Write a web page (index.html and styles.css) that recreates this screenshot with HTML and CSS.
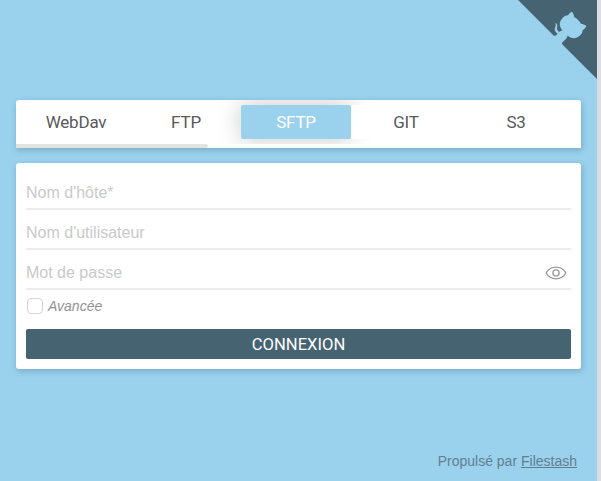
FILE: index.html
```html
<!DOCTYPE html>
<html lang="fr">
<head>
<meta charset="utf-8">
<title>Filestash</title>
<link rel="stylesheet" href="styles.css">
</head>
<body>
<div class="page">
  <a class="corner" aria-label="GitHub">
    <svg width="80" height="80" viewBox="0 0 250 250">
      <path class="corner-bg" d="M0,0 L115,115 L130,115 L142,142 L250,250 L250,0 Z"/>
      <path class="cat" d="M128.3,109.0 C113.8,99.7 119.0,89.6 119.0,89.6 C122.0,82.7 120.5,78.6 120.5,78.6 C119.2,72.0 123.4,76.3 123.4,76.3 C127.3,80.9 125.5,87.3 125.5,87.3 C122.9,97.6 130.6,101.9 134.4,103.2"/>
      <path class="cat" d="M115.0,115.0 C114.9,115.1 118.7,116.5 119.8,115.4 L133.7,101.6 C136.9,99.2 139.9,98.4 142.2,98.6 C133.8,88.0 127.5,74.4 143.8,58.0 C148.5,53.4 154.0,51.2 159.7,51.0 C160.3,49.4 163.2,43.6 171.4,40.1 C171.4,40.1 176.1,42.5 178.8,56.2 C183.1,58.6 187.2,61.8 190.9,65.4 C194.5,69.0 197.7,73.2 200.1,77.6 C213.8,80.2 216.3,84.9 216.3,84.9 C212.7,93.1 206.9,96.0 205.4,96.6 C205.1,102.4 203.0,107.8 198.3,112.5 C181.9,128.9 168.3,122.5 157.7,114.1 C157.9,116.9 156.7,120.9 152.7,124.9 L141.0,136.5 C139.8,137.7 141.6,141.9 141.8,141.8 Z"/>
    </svg>
  </a>
  <main>
    <nav class="card tabs">
      <div class="tab-list">
        <button class="tab">WebDav</button>
        <button class="tab">FTP</button>
        <button class="tab active">SFTP</button>
        <button class="tab">GIT</button>
        <button class="tab">S3</button>
      </div>
      <div class="scroll"></div>
    </nav>
    <form class="card form">
      <div class="field">Nom d'hôte*</div>
      <div class="field">Nom d'utilisateur</div>
      <div class="field">
        <span>Mot de passe</span>
        <svg class="eye" width="22" height="14" viewBox="0 0 22 14">
          <path d="M1.2 7C3.3 3.2 6.7 1.2 11 1.2S18.7 3.2 20.8 7C18.7 10.8 15.3 12.8 11 12.8S3.3 10.8 1.2 7Z"/>
          <circle cx="11" cy="7" r="3.1"/>
        </svg>
      </div>
      <label class="advanced"><span class="box"></span>Avancée</label>
      <button class="submit" type="button">CONNEXION</button>
    </form>
  </main>
  <footer>Propulsé par <a>Filestash</a></footer>
</div>
</body>
</html>
```
FILE: styles.css
```css
* { box-sizing: border-box; }
body {
  margin: 0;
  height: 481px;
  overflow: hidden;
  background: #dcdde1;
  font-family: Roboto, sans-serif;
}
button {
  border: 0;
  padding: 0;
  font: inherit;
}
.page {
  position: relative;
  display: flex;
  flex-direction: column;
  width: 597px;
  height: 481px;
  padding: 100px 16px 0;
  background: #9ad1ed;
}
.corner {
  position: absolute;
  top: -1px;
  right: 0;
}
.corner svg { display: block; }
.corner-bg { fill: #466372; }
.cat { fill: #9ad1ed; }
.card {
  background: #fff;
  box-shadow: 1px 2px 6px rgba(40, 80, 110, .3);
}
.tabs {
  height: 48px;
  margin-bottom: 15px;
  border-radius: 3px 3px 0 0;
}
.tab-list {
  display: flex;
  height: 44px;
  padding: 5px 5px;
  overflow: hidden;
}
.tab {
  width: 110px;
  height: 34px;
  border-radius: 2px;
  background: #fff;
  color: #57595a;
  font-size: 17px;
  line-height: 35px;
  letter-spacing: -.2px;
}
.tab.active {
  background: #9ad1ed;
  color: #fff;
  box-shadow: 0 0 24px rgba(0, 0, 0, .22);
}
.scroll {
  width: 192px;
  height: 4px;
  border-radius: 0 2px 2px 0;
  background: #e2e2e2;
}
.form {
  height: 206px;
  padding: 7px 10px 10px;
  border-radius: 3px;
}
.field {
  display: flex;
  align-items: center;
  justify-content: space-between;
  height: 40px;
  padding: 8px 4px 0 0;
  border-bottom: 2px solid #ededed;
  color: #c9c9c9;
  font: 16px/20px "Liberation Sans", sans-serif;
}
.eye {
  fill: none;
  stroke: #999;
  stroke-width: 1.3;
}
.advanced {
  display: flex;
  align-items: center;
  height: 32px;
  margin-bottom: 7px;
  padding-left: 1px;
  color: #929292;
  font: italic 14px/20px "Liberation Sans", sans-serif;
}
.box {
  width: 16px;
  height: 16px;
  margin-right: 5px;
  border: 1px solid #d4d4d4;
  border-radius: 4px;
}
.submit {
  display: block;
  width: 100%;
  height: 30px;
  padding-top: 1px;
  border-radius: 2px;
  background: #466372;
  color: #fff;
  font-size: 16.6px;
  line-height: 29px;
}
footer {
  margin-top: 82px;
  padding-right: 4px;
  color: #627f8f;
  text-align: right;
  font: 14px/20px "Liberation Sans", sans-serif;
}
footer a { text-decoration: underline; }
```
